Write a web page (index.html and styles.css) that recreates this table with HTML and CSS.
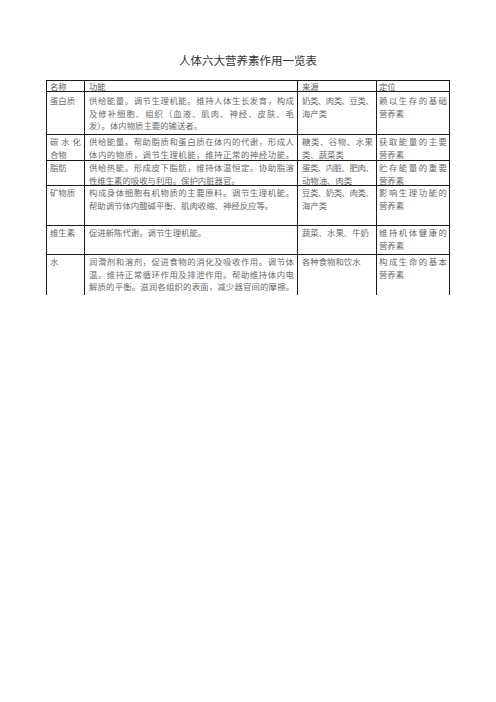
FILE: index.html
```html
<!DOCTYPE html>
<html lang="zh-CN">
<head>
<meta charset="utf-8">
<title>人体六大营养素作用一览表</title>
<link rel="stylesheet" href="styles.css">
</head>
<body>
<h1 class="title">人体六大营养素作用一览表</h1>
<div class="tbl">
  <div class="c c1 hd">名称</div>
  <div class="c c2 hd">功能</div>
  <div class="c c3 hd">来源</div>
  <div class="c c4 hd">定位</div>

  <div class="c c1 r1">蛋白质</div>
  <div class="c c2 r1"><span class="j">供给能量。调节生理机能。维持人体生长发育，构成</span><span class="j">及修补细胞、组织（血液、肌肉、神经、皮肤、毛</span><span>发）。体内物质主要的输送者。</span></div>
  <div class="c c3 r1"><span class="j t">奶类、肉类、豆类、</span><span>海产类</span></div>
  <div class="c c4 r1"><span class="j">赖以生存的基础</span><span>营养素</span></div>

  <div class="c c1"><span class="j">碳水化</span><span>合物</span></div>
  <div class="c c2"><span class="j">供给能量。帮助脂质和蛋白质在体内的代谢，形成人</span><span class="j">体内的物质，调节生理机能，维持正常的神经功能。</span></div>
  <div class="c c3"><span class="j">糖类、谷物、水果</span><span>类、蔬菜类</span></div>
  <div class="c c4"><span class="j">获取能量的主要</span><span>营养素</span></div>

  <div class="c c1">脂肪</div>
  <div class="c c2"><span class="j">供给热能。形成皮下脂肪，维持体温恒定。协助脂溶</span><span>性维生素的吸收与利用。保护内脏器官。</span></div>
  <div class="c c3"><span class="j t">蛋类、内脏、肥肉、</span><span>动物油、肉类</span></div>
  <div class="c c4"><span class="j">贮存能量的重要</span><span>营养素</span></div>

  <div class="c c1">矿物质</div>
  <div class="c c2"><span class="j">构成身体细胞有机物质的主要原料。调节生理机能。</span><span>帮助调节体内酸碱平衡、肌肉收缩、神经反应等。</span></div>
  <div class="c c3"><span class="j t">豆类、奶类、肉类、</span><span>海产类</span></div>
  <div class="c c4"><span class="j">影响生理功能的</span><span>营养素</span></div>

  <div class="c c1">维生素</div>
  <div class="c c2">促进新陈代谢。调节生理机能。</div>
  <div class="c c3">蔬菜、水果、牛奶</div>
  <div class="c c4"><span class="j">维持机体健康的</span><span>营养素</span></div>

  <div class="c c1 last">水</div>
  <div class="c c2 last"><span class="j">润滑剂和溶剂，促进食物的消化及吸收作用。调节体</span><span class="j">温。维持正常循环作用及排泄作用。帮助维持体内电</span><span class="j t2">解质的平衡。滋润各组织的表面，减少器官间的摩擦。</span></div>
  <div class="c c3 last">各种食物和饮水</div>
  <div class="c c4 last"><span class="j">构成生命的基本</span><span>营养素</span></div>
</div>
</body>
</html>
```

FILE: styles.css
```css
html, body {
  margin: 0;
  padding: 0;
  background: #ffffff;
}

body {
  padding-top: 52px;
  font-family: "Noto Sans CJK SC", "Noto Sans", sans-serif;
}

.title {
  margin: 0 0 12px 0;
  font-size: 11.5px;
  line-height: 16px;
  font-weight: normal;
  color: #333333;
  text-align: center;
}

.tbl {
  width: 404px;
  margin: 0 auto;
  box-sizing: border-box;
  display: grid;
  grid-template-columns: 38px 213px 79px 73px;
  grid-template-rows: 11px 43px 26px 25px 40px 29px 40px;
  border-left: 1px solid #1a1a1a;
  border-top: 1px solid #1a1a1a;
}

.c {
  box-sizing: border-box;
  border-right: 1px solid #1a1a1a;
  border-bottom: 1px solid #1a1a1a;
  font-size: 8.4px;
  line-height: 12.5px;
  color: #6a6a6a;
  overflow: hidden;
}

.c span {
  display: block;
  white-space: nowrap;
}

.c .j {
  text-align: justify;
  text-align-last: justify;
}

.c .t {
  letter-spacing: -0.45px;
}

.c .t2 {
  letter-spacing: -0.1px;
}

.c1 { padding: 0 3px 0 3px; }
.c2 { padding: 0 3px 0 4px; }
.c3 { padding: 0 3px 0 4px; }
.c4 { padding: 0 2px 0 2px; }

.hd {
  line-height: 10px;
  color: #5a5a5a;
}

.r1 {
  padding-top: 2px;
}

.last {
  border-bottom: none;
}
```
